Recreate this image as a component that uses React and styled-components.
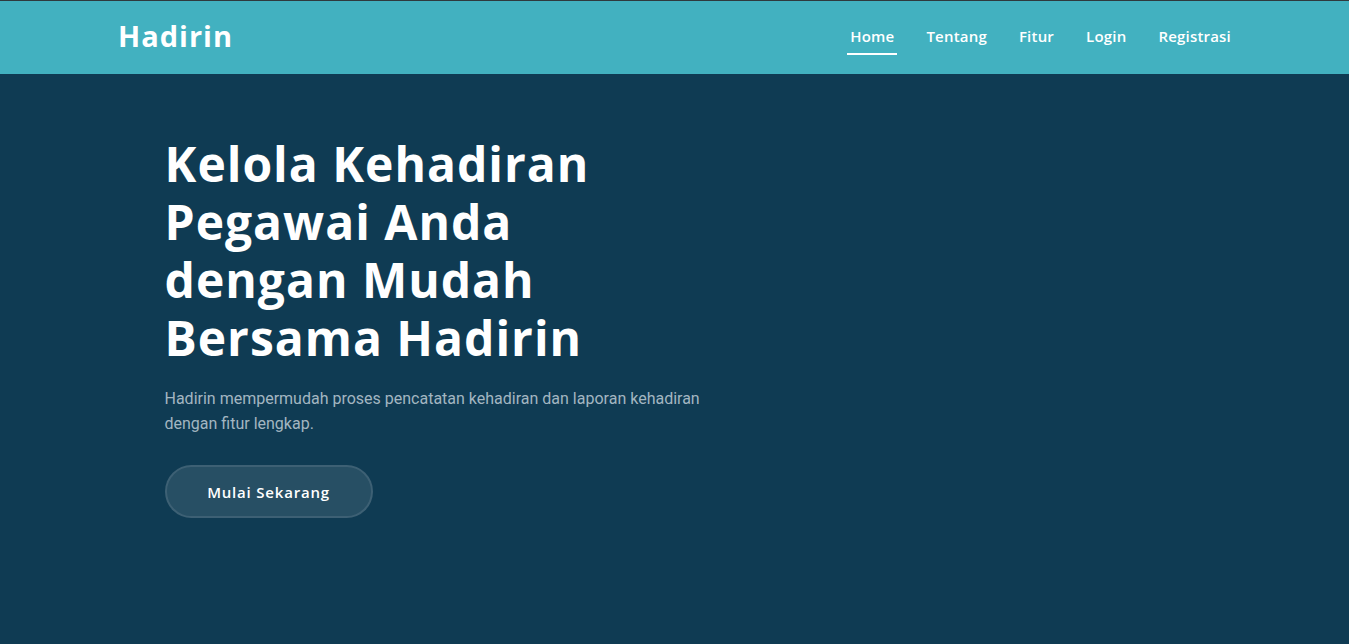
import React from "react";
import styled, { createGlobalStyle } from "styled-components";

const GlobalStyle = createGlobalStyle`
  * { box-sizing: border-box; }
  body {
    margin: 0;
    background: #0f3b53;
    font-family: "Roboto", "Liberation Sans", sans-serif;
  }
`;

const Page = styled.div`
  min-height: 100vh;
  background: #0f3b53;
`;

// navbar
const Navbar = styled.header`
  height: 74px;
  background: #42b1c0;
  border-top: 1px solid #2f3a3e;
`;

const NavInner = styled.div`
  max-width: 1113px;
  height: 100%;
  margin: 0 auto;
  padding-bottom: 4px;
  display: flex;
  align-items: center;
  justify-content: space-between;
`;

const Logo = styled.a`
  font-family: "Open Sans", "Liberation Sans", sans-serif;
  font-weight: 700;
  font-size: 29px;
  color: #fff;
  text-decoration: none;
  letter-spacing: 1px;
`;

const NavList = styled.nav`
  display: flex;
  align-items: center;
  gap: 32px;
`;

const NavLink = styled.a`
  position: relative;
  font-family: "Open Sans", "Liberation Sans", sans-serif;
  font-weight: 600;
  font-size: 15px;
  letter-spacing: 0.2px;
  color: #fff;
  text-decoration: none;
  padding: 6px 0;

  &::after {
    content: "";
    display: ${(p) => (p.$active ? "block" : "none")};
    position: absolute;
    left: -3px;
    right: -3px;
    bottom: -3px;
    height: 2px;
    background: #fff;
  }
`;

// hero
const Hero = styled.section`
  max-width: 1020px;
  margin: 0 auto;
  padding-top: 61px;
`;

const Heading = styled.h1`
  margin: 0;
  max-width: 480px;
  font-family: "Open Sans", "Liberation Sans", sans-serif;
  font-weight: 700;
  font-size: 48px;
  line-height: 58px;
  letter-spacing: 1px;
  color: #fff;
`;

const Lead = styled.p`
  margin: 19px 0 0;
  max-width: 560px;
  font-size: 16px;
  line-height: 25px;
  color: #a3b6c1;
`;

const CtaButton = styled.a`
  display: inline-flex;
  align-items: center;
  justify-content: center;
  margin-top: 29px;
  width: 208px;
  height: 53px;
  border-radius: 27px;
  background: rgba(255, 255, 255, 0.1);
  border: 2px solid rgba(255, 255, 255, 0.1);
  font-family: "Open Sans", "Liberation Sans", sans-serif;
  font-weight: 600;
  font-size: 15px;
  letter-spacing: 0.8px;
  color: #fff;
  text-decoration: none;
`;

const links = ["Home", "Tentang", "Fitur", "Login", "Registrasi"];

const App = () => {
  return (
    <Page>
      <GlobalStyle />
      <Navbar>
        <NavInner>
          <Logo href="#">Hadirin</Logo>
          <NavList>
            {links.map((l) => (
              <NavLink key={l} href="#" $active={l === "Home"}>
                {l}
              </NavLink>
            ))}
          </NavList>
        </NavInner>
      </Navbar>

      <Hero>
        <Heading>Kelola Kehadiran Pegawai Anda dengan Mudah Bersama Hadirin</Heading>
        <Lead>
          Hadirin mempermudah proses pencatatan kehadiran dan laporan kehadiran
          dengan fitur lengkap.
        </Lead>
        <CtaButton href="#">Mulai Sekarang</CtaButton>
      </Hero>
    </Page>
  );
};

export default App;
